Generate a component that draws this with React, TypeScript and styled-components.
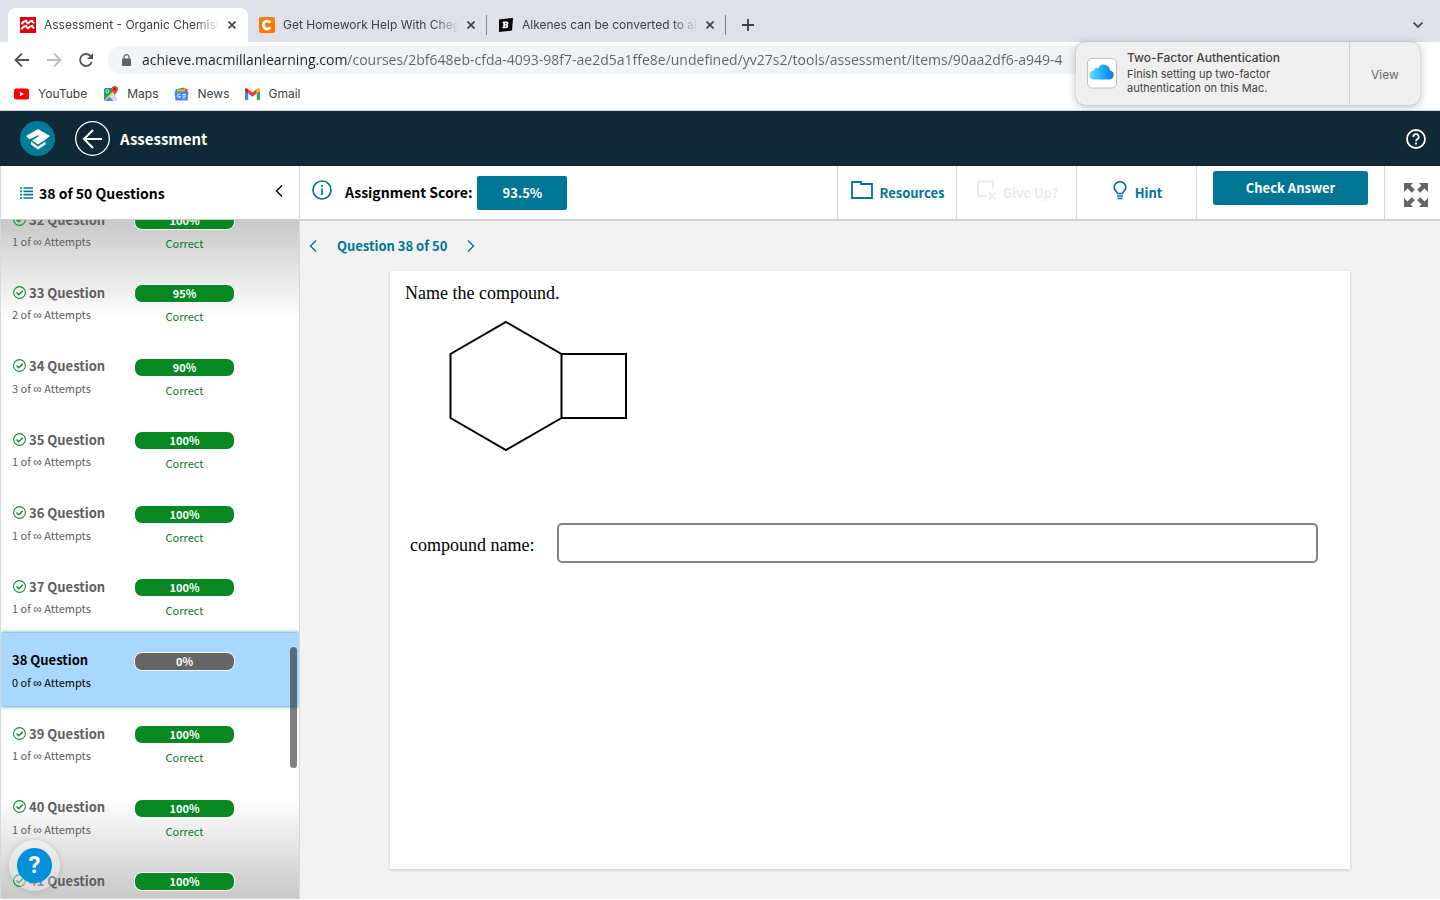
import React from "react";
import styled, { createGlobalStyle } from "styled-components";

const teal = "#007594";
const navy = "#0f2a36";
const ui = '"Inter", "Roboto", sans-serif';
const brand = '"Noto Sans CJK SC", "Open Sans", sans-serif';
const serif = '"Liberation Serif", "Times New Roman", serif';

const Global = createGlobalStyle`
  *, *::before, *::after { box-sizing: border-box; }
  body { margin: 0; background: #fff; }
  button, input { font: inherit; color: inherit; margin: 0; }
  button { border: 0; padding: 0; background: none; cursor: pointer; }
  a { color: inherit; text-decoration: none; }
  svg { display: block; flex: none; }
  h1, h2, p, ul { margin: 0; padding: 0; }
`;

const Page = styled.div`
  position: relative;
  display: flex;
  flex-direction: column;
  height: 100vh;
  min-height: 600px;
  overflow: hidden;
  font-family: ${brand};
`;

/* Browser chrome */

const TabStrip = styled.div`
  display: flex;
  align-items: flex-end;
  height: 42px;
  flex: none;
  padding: 0 16px 0 8px;
  background: #dee1e8;
  font: 12px/16px ${ui};
  color: #3c4043;
`;

const Tab = styled.div<{ $active?: boolean; $divider?: boolean }>`
  position: relative;
  display: flex;
  align-items: center;
  width: ${(p) => (p.$active ? 240 : 239)}px;
  height: 34px;
  padding: 0 10px 0 ${(p) => (p.$active ? 12 : 11)}px;
  border-radius: 8px 8px 0 0;
  background: ${(p) => (p.$active ? "#fff" : "transparent")};
  &::after {
    content: "";
    display: ${(p) => (p.$divider ? "block" : "none")};
    position: absolute;
    right: 0;
    top: 7px;
    width: 1px;
    height: 20px;
    background: #80868b;
  }
`;

const TabTitle = styled.span`
  flex: 1;
  min-width: 0;
  margin: 0 6px 0 8px;
  overflow: hidden;
  white-space: nowrap;
  mask-image: linear-gradient(90deg, #000 calc(100% - 26px), transparent);
`;

const IconButton = styled.button<{ $w?: number }>`
  display: flex;
  align-items: center;
  justify-content: center;
  width: ${(p) => p.$w ?? 12}px;
  height: 16px;
  flex: none;
`;

const NewTab = styled(IconButton)`
  width: 44px;
  height: 34px;
`;

const TabSearch = styled(IconButton)`
  height: 34px;
  margin-left: auto;
`;

const NavBar = styled.div`
  display: flex;
  align-items: center;
  height: 36px;
  flex: none;
  gap: 16px;
  padding: 0 40px 0 14px;
  background: #fff;
`;

const AddressBar = styled.label`
  display: flex;
  align-items: center;
  flex: 1;
  min-width: 0;
  height: 28px;
  gap: 11px;
  margin-left: -2px;
  padding: 0 12px 0 14px;
  border-radius: 14px;
  background: #f1f3f4;
`;

const AddressInput = styled.input`
  flex: 1;
  min-width: 0;
  height: 20px;
  border: 0;
  padding: 0;
  outline: 0;
  font: 14px/20px "Open Sans", "Roboto", sans-serif;
  background: linear-gradient(90deg, #202124 206px, #5f6368 206px);
  background-clip: text;
  -webkit-text-fill-color: transparent;
`;

const Bookmarks = styled.nav`
  display: flex;
  align-items: center;
  height: 33px;
  flex: none;
  gap: 16px;
  padding: 0 14px;
  border-bottom: 1px solid #d5d7da;
  background: #fff;
  font: 12px/16px ${ui};
  color: #3c4043;
`;

const Bookmark = styled.a`
  display: flex;
  align-items: center;
  gap: 8px;
`;

const Notification = styled.aside`
  position: absolute;
  z-index: 5;
  top: 42px;
  right: 20px;
  display: flex;
  width: 344px;
  height: 63px;
  border-radius: 9px;
  background: #efefef;
  box-shadow: 0 0 1px rgba(0, 0, 0, 0.4), 0 2px 10px rgba(0, 0, 0, 0.25);
  font-family: ${ui};
  color: #3f3f3f;
`;

const NotificationBody = styled.div`
  display: flex;
  flex: 1;
  align-items: center;
  gap: 10px;
  padding: 0 0 2px 11px;
`;

const NotificationText = styled.div`
  display: flex;
  flex-direction: column;
  padding-bottom: 2px;
  font-size: 11px;
  line-height: 14px;
  strong {
    font-weight: 500;
    font-size: 12px;
    line-height: 18px;
  }
`;

const NotificationAction = styled.button`
  width: 71px;
  padding-top: 2px;
  border-left: 1px solid #d2d2d2;
  font-size: 12px;
  color: #6a6a6a;
`;

/* Course header */

const CourseHeader = styled.header`
  display: flex;
  align-items: center;
  height: 55px;
  flex: none;
  padding: 0 14px 0 20px;
  background: ${navy};
  color: #fff;
`;

const BackLink = styled.a`
  display: flex;
  margin: 0 10px 0 20px;
`;

const CourseTitle = styled.h1`
  flex: 1;
  font-size: 15px;
  line-height: 24px;
  font-weight: 700;
`;

const HelpLink = styled.button`
  display: flex;
`;

/* Body */

const Body = styled.div`
  display: flex;
  flex: 1;
  min-height: 0;
  padding-bottom: 1px;
`;

const Sidebar = styled.aside`
  position: relative;
  display: flex;
  flex-direction: column;
  width: 300px;
  flex: none;
  border: 1px solid #d8d8d8;
  border-top: 0;
`;

const SidebarHead = styled.div`
  display: flex;
  align-items: center;
  height: 54px;
  flex: none;
  padding: 0 14px 0 19px;
  border-bottom: 1px solid #ccc;
  button { margin-bottom: 3px; }
  h2 {
    flex: 1;
    margin-left: 6px;
    font-size: 14px;
    line-height: 20px;
    font-weight: 700;
  }
`;

const ListView = styled.div`
  flex: 1;
  min-height: 0;
  overflow: hidden;
  background: linear-gradient(#c8c8c8, #fff 100px, #fff calc(100% - 100px), #c8c8c8);
`;

const QuestionList = styled.ul`
  display: grid;
  grid-template-rows: repeat(11, 1fr);
  height: 808px;
  margin-top: -28px;
  list-style: none;
`;

const QuestionRow = styled.a<{ $current: boolean }>`
  display: flex;
  height: 100%;
  padding: 16px 0 0 11px;
  color: ${(p) => (p.$current ? "#000" : "#5e5e5e")};
  background: ${(p) => (p.$current ? "#a8d8ff" : "transparent")};
  box-shadow: ${(p) => (p.$current ? "0 0 4px #007594" : "none")};
`;

const RowInfo = styled.div`
  width: 122px;
`;

const RowName = styled.div`
  display: flex;
  align-items: center;
  gap: 3px;
  height: 22px;
  font-size: 13px;
  font-weight: 700;
  svg { margin-left: 1px; }
`;

const Attempts = styled.div`
  height: 22px;
  font-size: 11px;
  line-height: 22px;
`;

const Infinity = styled.span`
  font-family: "Liberation Sans", sans-serif;
  font-size: 12px;
`;

const RowScore = styled.div`
  width: 101px;
  padding-top: 3px;
  text-align: center;
`;

const Pill = styled.div<{ $current: boolean }>`
  height: 19px;
  border: 1px solid #fff;
  border-radius: 8px;
  background: ${(p) => (p.$current ? "#666" : "#078823")};
  color: #fff;
  font-size: 11px;
  line-height: 16px;
  font-weight: 700;
`;

const Verdict = styled.div`
  margin-top: 3px;
  font-size: 11px;
  line-height: 20px;
  color: #077a1f;
`;

const ScrollThumb = styled.div`
  position: absolute;
  right: 2px;
  top: 481px;
  width: 7px;
  height: 121px;
  border-radius: 4px;
  background: rgba(0, 0, 0, 0.5);
`;

const SupportButton = styled.button`
  position: absolute;
  left: 8px;
  bottom: 7px;
  display: flex;
  align-items: center;
  justify-content: center;
  width: 51px;
  height: 51px;
  border-radius: 50%;
  background: rgba(255, 255, 255, 0.3);
  box-shadow: 0 0 6px rgba(0, 0, 0, 0.15);
  span {
    width: 35px;
    height: 35px;
    border-radius: 50%;
    background: #0090dc;
    color: #fff;
    font: 700 24px/35px "Roboto", sans-serif;
  }
`;

const Main = styled.main`
  display: flex;
  flex-direction: column;
  flex: 1;
  min-width: 0;
  background: #f2f2f2;
`;

const Toolbar = styled.div`
  display: flex;
  height: 55px;
  flex: none;
  border-bottom: 2px solid #d0d0d0;
  background: #fff;
  font-size: 13px;
  line-height: 20px;
  font-weight: 700;
`;

const ScoreArea = styled.div`
  display: flex;
  align-items: center;
  flex: 1;
  padding-left: 12px;
`;

const ScoreLabel = styled.span`
  padding-bottom: 2px;
  font-size: 14px;
`;

const InfoButton = styled.button`
  display: flex;
  height: 26px;
  margin-right: 13px;
`;

const ScoreButton = styled.button`
  width: 90px;
  height: 34px;
  margin-left: 5px;
  border-radius: 2px;
  background: ${teal};
  color: #fff;
`;

const ToolCell = styled.div<{ $width: number }>`
  display: flex;
  justify-content: center;
  width: ${(p) => p.$width}px;
  border-left: 1px solid #d8d8d8;
`;

const ToolButton = styled.button<{ $gap?: number }>`
  display: flex;
  align-items: center;
  justify-content: center;
  gap: ${(p) => p.$gap ?? 6}px;
  width: 100%;
  padding-left: 2px;
  color: ${teal};
  svg { margin-bottom: 5px; }
  &:disabled { color: #ececec; }
`;

const ExpandButton = styled.button`
  display: flex;
  align-items: center;
  justify-content: center;
  width: 100%;
  padding: 4px 0 0 6px;
`;

const CheckButton = styled.button`
  width: 155px;
  height: 34px;
  margin-top: 5px;
  padding-bottom: 1px;
  border-radius: 3px;
  background: ${teal};
  color: #fff;
`;

const QuestionNav = styled.nav`
  display: flex;
  align-items: center;
  gap: 20px;
  height: 50px;
  flex: none;
  padding-left: 9px;
  color: ${teal};
  font-size: 13px;
  line-height: 20px;
  font-weight: 700;
  span { padding-bottom: 1px; }
`;

const Card = styled.section`
  flex: 1;
  width: calc(100% - 40px);
  max-width: 960px;
  margin: 0 auto 30px;
  padding: 12px 32px 0 15px;
  background: #fff;
  box-shadow: 0 1px 3px rgba(0, 0, 0, 0.2);
  font: 18px/20px ${serif};
  color: #000;
`;

const Molecule = styled.svg`
  margin: 15px 0 0 43px;
`;

const AnswerRow = styled.div`
  display: flex;
  align-items: center;
  gap: 23px;
  margin: 69px 0 0 5px;
  label { padding-top: 4px; }
`;

const AnswerInput = styled.input`
  flex: 1;
  min-width: 0;
  height: 40px;
  padding: 0 10px;
  border: 2px solid #858585;
  border-radius: 5px;
  background: #fff;
`;

/* Icons */

const CloseIcon = () => (
  <svg width="8" height="8" viewBox="0 0 8 8" stroke="#3c4043" strokeWidth="1.6">
    <path d="M.5.5l7 7M7.5.5l-7 7" />
  </svg>
);

const Chevron = ({ right = false }: { right?: boolean }) => (
  <svg width="8" height="14" viewBox="0 0 8 14" fill="none" stroke="currentColor" strokeWidth="1.4">
    <path d={right ? "M1 1.500L6.500 7 1 12.500" : "M7 1.500L1.500 7 7 12.500"} />
  </svg>
);

const PublisherIcon = () => (
  <svg width="16" height="16" viewBox="0 0 16 16">
    <rect width="16" height="16" fill="#e1000f" />
    <path
      d="M1.500 7.300C2.500 5.300 4 4.200 6.300 3.800Q6.300 5.800 8 6.300C9 5 10.300 4.200 12.300 3.800Q12.500 5.500 14.300 6M1.500 12.300C2.500 10.300 4 9.200 6.300 8.800Q6.300 10.800 8 11.300C9 10 10.300 9.200 12.300 8.800Q12.500 10.500 14.300 11"
      fill="none"
      stroke="#fff"
      strokeWidth="1.900"
    />
  </svg>
);

const TutorIcon = () => (
  <svg width="16" height="16" viewBox="0 0 16 16">
    <rect width="16" height="16" rx="2" fill="#fb7a05" />
    <path d="M11.300 5.700A3.900 3.900 0 1 0 11.300 10.300" fill="none" stroke="#fff" strokeWidth="2.700" />
  </svg>
);

const StudyIcon = () => (
  <svg width="16" height="14" viewBox="0 0 16 14">
    <path d="M1 1.500L15 0l-1 12.500L1 14z" fill="#000" />
    <path d="M5 3.500H9Q10.800 3.800 10.500 5.500L9.700 6.700Q10.700 7.500 10 9 9.300 10.200 8 10.200H4.500V8.800H5.200V5H4.500zM7.200 5V6.200H8.300V5zM7.200 7.500V8.700H8.300V7.500z" fill="#fff" fillRule="evenodd" />
  </svg>
);

const ArrowIcon = ({ forward = false }: { forward?: boolean }) => (
  <svg width="16" height="16" viewBox="0 0 16 16" fill="none" stroke={forward ? "#babcbe" : "#50545a"} strokeWidth="1.800">
    <path d={forward ? "M1 8h13M8 1.500L14.500 8 8 14.500" : "M15 8H2M8 1.500L1.500 8 8 14.500"} />
  </svg>
);

const ReloadIcon = () => (
  <svg width="16" height="16" viewBox="0 0 16 16">
    <path d="M13.700 10A6 6 0 1 1 12.400 3.800" fill="none" stroke="#50545a" strokeWidth="1.900" />
    <path d="M15 1v6H9z" fill="#50545a" />
  </svg>
);

const LockIcon = () => (
  <svg width="9" height="12" viewBox="0 0 9 12">
    <path d="M2 5V3.200a2.500 2.500 0 0 1 5 0V5" fill="none" stroke="#5f6368" strokeWidth="1.200" />
    <rect y="4.500" width="9" height="7.500" rx="1" fill="#5f6368" />
  </svg>
);

const YouTubeIcon = () => (
  <svg width="16" height="12" viewBox="0 0 16 12">
    <rect width="15" height="11" y=".5" rx="2.500" fill="#f00" />
    <path d="M6 3.700v4.600L10 6z" fill="#fff" />
  </svg>
);

const MapsIcon = () => (
  <svg width="16" height="16" viewBox="0 0 16 16">
    <rect x="1" y="2" width="13" height="13" rx="1.500" fill="#e8eaed" />
    <path d="M1 3.500Q1 2 2.500 2H10L9 8 1.500 14.500 1 14z" fill="#1ea362" />
    <path d="M9 7.500l5 5.500v1q0 1-1 1H10L6.500 10z" fill="#dadce0" />
    <path d="M6 10.500L10.500 15H2z" fill="#4a89f3" />
    <path d="M9.500 5.500L2 13.500v1.300L10.500 7z" fill="#fdd835" />
    <circle cx="4.300" cy="5.300" r="1.500" fill="none" stroke="#fff" strokeWidth=".8" />
    <path d="M11.700 0a3.300 3.300 0 0 0-3.300 3.300c0 2.500 2.700 3.200 3.300 6.700.6-3.500 3.300-4.200 3.300-6.700A3.300 3.300 0 0 0 11.700 0z" fill="#ea4335" />
    <circle cx="11.700" cy="3.300" r="1.200" fill="#8c1f17" />
  </svg>
);

const NewsIcon = () => (
  <svg width="15" height="14" viewBox="0 0 15 14">
    <path d="M8 1l5.500 1-.5 4H8z" fill="#ea4335" />
    <path d="M1.500 2.500l8-2 1 5h-9z" fill="#1b9e5a" />
    <path d="M3 2.300h8v3H3z" fill="#fbbc04" />
    <path d="M.500 4.500h14l-1 9h-12z" fill="#4285f4" />
    <path d="M6.300 7.800A1.700 1.700 0 1 0 6.500 9.500H5M8.500 7.500H12M8.500 9.200H12M8.500 11H11" fill="none" stroke="#fff" strokeWidth=".9" />
  </svg>
);

const GmailIcon = () => (
  <svg width="15" height="12" viewBox="0 0 14 11">
    <path d="M0 2v8.500Q0 11 .7 11H3V4.500z" fill="#4285f4" />
    <path d="M14 2v8.500q0 .5-.7.5H11V4.500z" fill="#34a853" />
    <path d="M3 1v4l4 3 4-3V1L7 4z" fill="#ea4335" />
    <path d="M0 1.500C0 0 1.600-.2 3 1v4L0 2.700z" fill="#c5221f" />
    <path d="M14 1.500c0-1.500-1.600-1.700-3-.5v4l3-2.300z" fill="#fbbc04" />
  </svg>
);

const CloudIcon = () => (
  <svg width="30" height="32" viewBox="0 0 30 32">
    <defs>
      <linearGradient id="cloud" x1="0" x2="1">
        <stop offset="0" stopColor="#6fd6ff" />
        <stop offset=".5" stopColor="#1db2fd" />
        <stop offset="1" stopColor="#1673ef" />
      </linearGradient>
    </defs>
    <rect x=".5" y="1.500" width="29" height="29.500" rx="4.500" fill="#fff" stroke="#c3c3c3" />
    <path d="M7 22.500a4.500 4.500 0 0 1-.4-9 4 4 0 0 1 4.600-2.300 6.200 6.200 0 0 1 11.800 2.300 4.600 4.600 0 0 1-.1 9z" fill="url(#cloud)" />
  </svg>
);

const BrandLogo = () => (
  <svg width="35" height="35" viewBox="0 0 35 35">
    <circle cx="17.500" cy="17.500" r="17.500" fill="#007c98" />
    <path d="M18 8l12 7-4.500 3.500-3 2L18 23.500l-6-4 7-4.500-1-.8-8.500 4L6 15z" fill="#fff" />
    <path d="M11 20.500l7 5 7.500-5v3L18 28.500l-7-5z" fill="#fff" />
  </svg>
);

const BackIcon = () => (
  <svg width="35" height="35" viewBox="0 0 35 35" fill="none" stroke="#fff">
    <circle cx="17.500" cy="17.500" r="16.800" strokeWidth="1.300" />
    <path d="M27 18H9M18 9l-9 9 9 9" strokeWidth="2" />
  </svg>
);

const HelpIcon = () => (
  <svg width="20" height="20" viewBox="0 0 20 20" fill="none" stroke="#fff" strokeWidth="1.800">
    <circle cx="10" cy="10" r="9" />
    <path d="M7.300 8a2.700 2.700 0 1 1 3.900 2.300c-.9.500-1.200.9-1.200 1.900" />
    <path d="M10 13.500v2" />
  </svg>
);

const ListIcon = () => (
  <svg width="13" height="12" viewBox="0 0 13 12" stroke={teal} strokeWidth="1.700">
    <path d="M0 1h2M0 4.300h2M0 7.600h2M0 11h2M3.500 1H13M3.500 4.300H13M3.500 7.600H13M3.500 11H13" />
  </svg>
);

const InfoIcon = () => (
  <svg width="20" height="20" viewBox="0 0 20 20" fill="none" stroke={teal} strokeWidth="1.700">
    <circle cx="10" cy="10" r="9" />
    <path d="M10 8.500V15M10 5v2" />
  </svg>
);

const FolderIcon = () => (
  <svg width="22" height="18" viewBox="0 0 22 18" fill="none" stroke="currentColor" strokeWidth="1.800">
    <path d="M1 17V1h9v2h11v14z" />
  </svg>
);

const GiveUpIcon = () => (
  <svg width="20" height="20" viewBox="0 0 20 20" fill="none" stroke="currentColor" strokeWidth="1.800">
    <path d="M9.500 16H1V1.500h15V9M12 12.500l6.500 6.500M18.500 12.500L12 19" />
  </svg>
);

const BulbIcon = () => (
  <svg width="14" height="19" viewBox="0 0 14 19" fill="none" stroke="currentColor" strokeWidth="1.700">
    <path d="M4.500 12.500C4.300 10.500 1.200 9.500 1.200 6.500a5.800 5.800 0 0 1 11.600 0c0 3-3.100 4-3.300 6z" />
    <path d="M4 15h6M4.500 17.500h5" />
  </svg>
);

const ExpandIcon = () => (
  <svg width="24" height="24" viewBox="0 0 24 24" fill="#646464">
    <path d="M0 0h9L6.500 2.500l4.300 4.300-3 3-4.300-4.300L0 9z" />
    <path d="M24 0h-9l2.500 2.500-4.300 4.300 3 3 4.300-4.300L24 9z" />
    <path d="M0 24h9l-2.500-2.500 4.300-4.300-3-3-4.300 4.300L0 15z" />
    <path d="M24 24h-9l2.500-2.500-4.300-4.300 3-3 4.300 4.300L24 15z" />
  </svg>
);

const CheckIcon = () => (
  <svg width="13" height="13" viewBox="0 0 13 13" fill="none" stroke="#168a30" strokeWidth="1.100">
    <circle cx="6.500" cy="6.500" r="5.900" />
    <path d="M3.500 6.500l2.200 2.200 4-4" strokeWidth="1.400" />
  </svg>
);

/* Data */

const questions = [
  { id: 32, tries: 1, score: 100 },
  { id: 33, tries: 2, score: 95 },
  { id: 34, tries: 3, score: 90 },
  { id: 35, tries: 1, score: 100 },
  { id: 36, tries: 1, score: 100 },
  { id: 37, tries: 1, score: 100 },
  { id: 38, tries: 0, score: 0 },
  { id: 39, tries: 1, score: 100 },
  { id: 40, tries: 1, score: 100 },
  { id: 41, tries: 1, score: 100 },
];

const tabs = [
  { title: "Assessment - Organic Chemistry", icon: <PublisherIcon /> },
  { title: "Get Homework Help With Chegg", icon: <TutorIcon /> },
  { title: "Alkenes can be converted to alcohols", icon: <StudyIcon /> },
];

const bookmarks = [
  { name: "YouTube", icon: <YouTubeIcon /> },
  { name: "Maps", icon: <MapsIcon /> },
  { name: "News", icon: <NewsIcon /> },
  { name: "Gmail", icon: <GmailIcon /> },
];

export default function App() {
  const current = 38;
  return (
    <Page>
      <Global />
      <TabStrip>
        {tabs.map((tab, i) => (
          <Tab key={tab.title} $active={i === 0} $divider={i > 0}>
            {tab.icon}
            <TabTitle>{tab.title}</TabTitle>
            <IconButton aria-label="Close tab"><CloseIcon /></IconButton>
          </Tab>
        ))}
        <NewTab aria-label="New tab">
          <svg width="12" height="12" viewBox="0 0 12 12" stroke="#3c4043" strokeWidth="1.800"><path d="M6 0v12M0 6h12" /></svg>
        </NewTab>
        <TabSearch aria-label="Search tabs">
          <svg width="10" height="6" viewBox="0 0 10 6" fill="none" stroke="#3c4043" strokeWidth="1.700"><path d="M.7.700L5 5 9.300.700" /></svg>
        </TabSearch>
      </TabStrip>
      <NavBar>
        <IconButton $w={16} aria-label="Back"><ArrowIcon /></IconButton>
        <IconButton $w={16} aria-label="Forward"><ArrowIcon forward /></IconButton>
        <IconButton $w={16} aria-label="Reload"><ReloadIcon /></IconButton>
        <AddressBar>
          <LockIcon />
          <AddressInput
            aria-label="Address"
            defaultValue="achieve.macmillanlearning.com/courses/2bf648eb-cfda-4093-98f7-ae2d5a1ffe8e/undefined/yv27s2/tools/assessment/items/90aa2df6-a949-4"
          />
        </AddressBar>
      </NavBar>
      <Bookmarks>
        {bookmarks.map((b) => (
          <Bookmark key={b.name} href="#">{b.icon}{b.name}</Bookmark>
        ))}
      </Bookmarks>
      <Notification>
        <NotificationBody>
          <CloudIcon />
          <NotificationText>
            <strong>Two-Factor Authentication</strong>
            <span>Finish setting up two-factor<br />authentication on this Mac.</span>
          </NotificationText>
        </NotificationBody>
        <NotificationAction>View</NotificationAction>
      </Notification>

      <CourseHeader>
        <BrandLogo />
        <BackLink href="#" aria-label="Back to course"><BackIcon /></BackLink>
        <CourseTitle>Assessment</CourseTitle>
        <HelpLink aria-label="Help"><HelpIcon /></HelpLink>
      </CourseHeader>

      <Body>
        <Sidebar>
          <SidebarHead>
            <ListIcon />
            <h2>38 of 50 Questions</h2>
            <IconButton aria-label="Collapse list"><Chevron /></IconButton>
          </SidebarHead>
          <ListView>
            <QuestionList>
              {questions.map((q) => {
                const isCurrent = q.id === current;
                return (
                  <li key={q.id}>
                    <QuestionRow href={`#question-${q.id}`} $current={isCurrent}>
                      <RowInfo>
                        <RowName>{!isCurrent && <CheckIcon />}{q.id} Question</RowName>
                        <Attempts>{q.tries} of <Infinity>∞</Infinity> Attempts</Attempts>
                      </RowInfo>
                      <RowScore>
                        <Pill $current={isCurrent}>{q.score}%</Pill>
                        {!isCurrent && <Verdict>Correct</Verdict>}
                      </RowScore>
                    </QuestionRow>
                  </li>
                );
              })}
            </QuestionList>
          </ListView>
          <ScrollThumb />
          <SupportButton aria-label="Support"><span>?</span></SupportButton>
        </Sidebar>

        <Main>
          <Toolbar>
            <ScoreArea>
              <InfoButton aria-label="Assignment information"><InfoIcon /></InfoButton>
              <ScoreLabel>Assignment Score:</ScoreLabel>
              <ScoreButton>93.5%</ScoreButton>
            </ScoreArea>
            <ToolCell $width={119}><ToolButton><FolderIcon />Resources</ToolButton></ToolCell>
            <ToolCell $width={120}><ToolButton disabled><GiveUpIcon />Give Up?</ToolButton></ToolCell>
            <ToolCell $width={120}><ToolButton $gap={8}><BulbIcon />Hint</ToolButton></ToolCell>
            <ToolCell $width={188}><CheckButton>Check Answer</CheckButton></ToolCell>
            <ToolCell $width={56}><ExpandButton aria-label="Full screen"><ExpandIcon /></ExpandButton></ToolCell>
          </Toolbar>
          <QuestionNav>
            <IconButton $w={8} aria-label="Previous question"><Chevron /></IconButton>
            <span>Question 38 of 50</span>
            <IconButton $w={8} aria-label="Next question"><Chevron right /></IconButton>
          </QuestionNav>
          <Card>
            <p>Name the compound.</p>
            <Molecule width="182" height="136" viewBox="0 0 182 136" fill="none" stroke="#000" strokeWidth="2">
              <path d="M58 4L113.500 36V100L58 132 2.500 100V36zM113.500 36H178V100H113.500" />
            </Molecule>
            <AnswerRow>
              <label htmlFor="compound">compound name:</label>
              <AnswerInput id="compound" type="text" />
            </AnswerRow>
          </Card>
        </Main>
      </Body>
    </Page>
  );
}
